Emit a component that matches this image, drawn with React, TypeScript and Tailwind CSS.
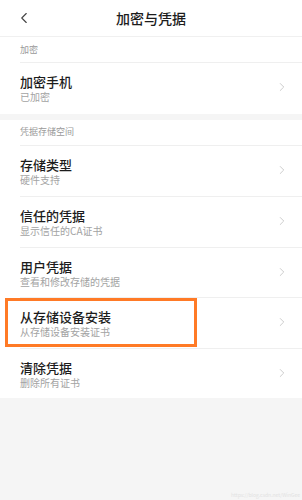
import { ChevronLeft, ChevronRight } from 'lucide-react';

const font = { fontFamily: '"Noto Sans CJK SC", "Noto Sans", sans-serif' };

interface RowProps {
  title: string;
  sub: string;
  first?: boolean;
  highlight?: boolean;
}

const Row = ({ title, sub, first, highlight }: RowProps) => (
  <div className="relative bg-white pl-5">
    <div className={`flex h-[50.5px] items-start pr-[13px] ${first ? '' : 'border-t border-[#efefef]'}`}>
      <div className="flex flex-1 flex-col pt-[11px]">
        <span className="text-[13px] leading-[16px] font-medium text-[#1c1c1c]">{title}</span>
        <span className="text-[10px] leading-[14px] text-[#a3a3a3]">{sub}</span>
      </div>
      <ChevronRight className="mt-[17px] h-[14px] w-[14px] text-[#bdbdbd]" strokeWidth={1.3} />
    </div>
    {highlight && (
      <div className="pointer-events-none absolute left-[5px] top-[1px] h-[49px] w-[192px] border-[3px] border-[#ff7a26]" />
    )}
  </div>
);

const Section = ({ label }: { label: string }) => (
  <div className="bg-white pl-5">
    <div className="flex h-[26px] items-center border-b border-[#efefef] text-[9px] text-[#9a9a9a]">{label}</div>
  </div>
);

export default function App() {
  return (
    <div className="relative flex h-[500px] w-[302px] flex-col overflow-hidden bg-[#f5f5f5]" style={font}>
      <div className="relative flex h-[37px] items-center justify-center border-b border-[#f0f0f0] bg-white">
        <ChevronLeft className="absolute left-[15px] top-[9px] h-[18px] w-[18px] text-[#444]" strokeWidth={1.5} />
        <span className="text-[14px] font-medium text-[#1c1c1c]">加密与凭据</span>
      </div>

      <Section label="加密" />
      <Row title="加密手机" sub="已加密" first />

      <div className="h-[6px]" />

      <Section label="凭据存储空间" />
      <Row title="存储类型" sub="硬件支持" first />
      <Row title="信任的凭据" sub="显示信任的CA证书" />
      <Row title="用户凭据" sub="查看和修改存储的凭据" />
      <Row title="从存储设备安装" sub="从存储设备安装证书" highlight />
      <Row title="清除凭据" sub="删除所有证书" />

      <div className="flex flex-1 items-end justify-end pb-[2px] pr-[2px]">
        <span className="text-[5px] text-[#e2e2e2]">https://blog.csdn.net/WinGee</span>
      </div>
    </div>
  );
}
